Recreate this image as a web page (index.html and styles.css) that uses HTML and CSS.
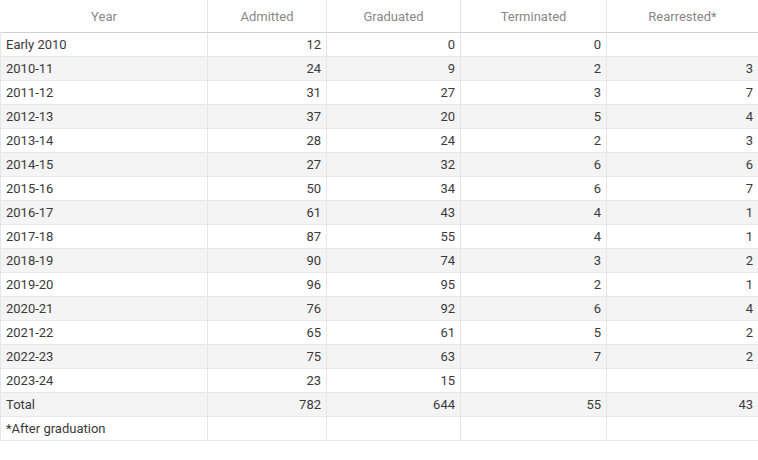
FILE: index.html
```html
<!DOCTYPE html>
<html lang="en">
<head>
<meta charset="utf-8">
<title>Program statistics</title>
<link rel="stylesheet" href="styles.css">
</head>
<body>
<table class="stats">
  <colgroup>
    <col class="c1"><col class="c2"><col class="c3"><col class="c4"><col class="c5">
  </colgroup>
  <thead>
    <tr><th>Year</th><th>Admitted</th><th>Graduated</th><th>Terminated</th><th>Rearrested*</th></tr>
  </thead>
  <tbody>
    <tr><td>Early 2010</td><td>12</td><td>0</td><td>0</td><td></td></tr>
    <tr><td>2010-11</td><td>24</td><td>9</td><td>2</td><td>3</td></tr>
    <tr><td>2011-12</td><td>31</td><td>27</td><td>3</td><td>7</td></tr>
    <tr><td>2012-13</td><td>37</td><td>20</td><td>5</td><td>4</td></tr>
    <tr><td>2013-14</td><td>28</td><td>24</td><td>2</td><td>3</td></tr>
    <tr><td>2014-15</td><td>27</td><td>32</td><td>6</td><td>6</td></tr>
    <tr><td>2015-16</td><td>50</td><td>34</td><td>6</td><td>7</td></tr>
    <tr><td>2016-17</td><td>61</td><td>43</td><td>4</td><td>1</td></tr>
    <tr><td>2017-18</td><td>87</td><td>55</td><td>4</td><td>1</td></tr>
    <tr><td>2018-19</td><td>90</td><td>74</td><td>3</td><td>2</td></tr>
    <tr><td>2019-20</td><td>96</td><td>95</td><td>2</td><td>1</td></tr>
    <tr><td>2020-21</td><td>76</td><td>92</td><td>6</td><td>4</td></tr>
    <tr><td>2021-22</td><td>65</td><td>61</td><td>5</td><td>2</td></tr>
    <tr><td>2022-23</td><td>75</td><td>63</td><td>7</td><td>2</td></tr>
    <tr><td>2023-24</td><td>23</td><td>15</td><td></td><td></td></tr>
    <tr><td>Total</td><td>782</td><td>644</td><td>55</td><td>43</td></tr>
    <tr><td>*After graduation</td><td></td><td></td><td></td><td></td></tr>
  </tbody>
</table>
</body>
</html>
```

FILE: styles.css
```css
html, body {
  margin: 0;
  padding: 0;
  background: #ffffff;
}

body {
  font-family: Roboto, "Liberation Sans", Arial, sans-serif;
  font-size: 13px;
  color: #3a3a3a;
}

.stats {
  width: 758px;
  table-layout: fixed;
  border-collapse: separate;
  border-spacing: 0;
}

.stats .c1 { width: 207px; }
.stats .c2 { width: 119px; }
.stats .c3 { width: 134px; }
.stats .c4 { width: 146px; }
.stats .c5 { width: 152px; }

.stats th,
.stats td {
  box-sizing: border-box;
  padding: 0 5px;
  border-left: 1px solid #e6e6e6;
  white-space: nowrap;
  overflow: hidden;
}

.stats th {
  height: 33px;
  font-weight: normal;
  color: #888888;
  text-align: center;
  border-bottom: 1px solid #d2d2d2;
}

.stats th:first-child {
  border-left-color: transparent;
}

.stats td {
  height: 24px;
  text-align: right;
  border-bottom: 1px solid #e8e8e8;
}

.stats td:first-child {
  text-align: left;
}

.stats tbody tr:nth-child(even) td {
  background: #f4f4f4;
}
```
